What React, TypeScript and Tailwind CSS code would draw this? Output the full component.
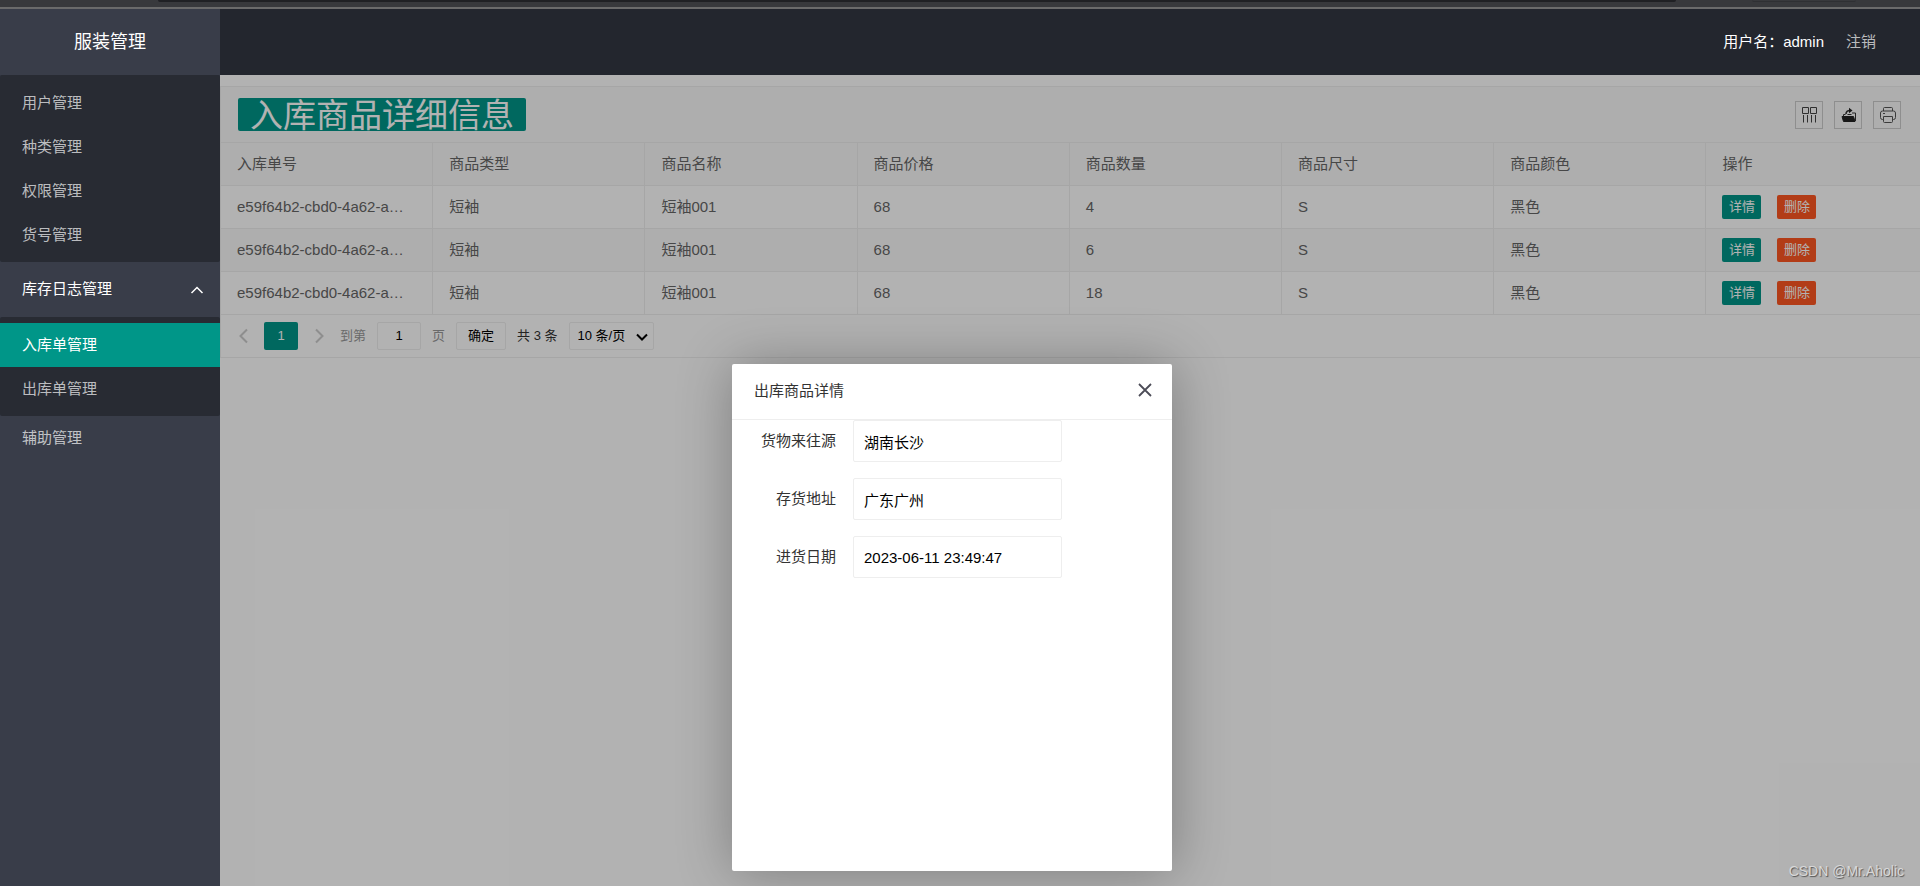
import { useState } from "react";

const FONT = "font-['Liberation_Sans','Noto_Sans_CJK_SC',sans-serif]";

const topMenu = ["用户管理", "种类管理", "权限管理", "货号管理"];
const stockMenu = ["入库单管理", "出库单管理"];
const columns = ["入库单号", "商品类型", "商品名称", "商品价格", "商品数量", "商品尺寸", "商品颜色", "操作"];
const orderId = "e59f64b2-cbd0-4a62-a…";
const rows = [
  [orderId, "短袖", "短袖001", "68", "4", "S", "黑色"],
  [orderId, "短袖", "短袖001", "68", "6", "S", "黑色"],
  [orderId, "短袖", "短袖001", "68", "18", "S", "黑色"],
];
const details = [
  { id: "source", label: "货物来往源", value: "湖南长沙" },
  { id: "address", label: "存货地址", value: "广东广州" },
  { id: "date", label: "进货日期", value: "2023-06-11 23:49:47" },
];

function ColumnsIcon() {
  return (
    <svg width="16" height="16" viewBox="0 0 16 16" fill="none" stroke="#444" strokeWidth="1">
      <path d="M.5.5h6v6h-6zM8.500.5h6v6h-6zM1.500 8v7.500M5.500 8v7.500M9.500 8v7.500M13.500 8v7.500" />
    </svg>
  );
}

function ExportIcon() {
  return (
    <svg width="16" height="16" viewBox="0 0 16 16" fill="none" stroke="#333" strokeWidth="1">
      <path d="M1 9.500h11.500l1.500 5H2.500z" fill="#222" stroke="#222" />
      <path d="M2.500 9V7.500h2M11 6h3.500v8" />
      <path d="M5 7C5 4.500 6.500 3.500 9 3.500" strokeWidth="1.600" />
      <path d="M8 .8 11.500 3.500 8 6.200z" fill="#222" stroke="none" />
      <path d="M6.500 7.500h4" />
    </svg>
  );
}

function PrintIcon() {
  return (
    <svg width="16" height="16" viewBox="0 0 16 16" fill="none" stroke="#555" strokeWidth="1">
      <path d="M3.500 4V1.500a1 1 0 0 1 1-1h7a1 1 0 0 1 1 1V4" />
      <path d="M3.500 12.500h-1a2 2 0 0 1-2-2V6a2 2 0 0 1 2-2h11a2 2 0 0 1 2 2v4.500a2 2 0 0 1-2 2h-1" />
      <path d="M3.500 9.500h9v5a1 1 0 0 1-1 1h-7a1 1 0 0 1-1-1zM3 6.500h2" />
    </svg>
  );
}

function Chevron({ d, className }: { d: string; className: string }) {
  return (
    <svg width="14" height="16" viewBox="0 0 14 16" fill="none" stroke="currentColor" className={className}>
      <path d={d} />
    </svg>
  );
}

function MenuLink({ text, active = false }: { text: string; active?: boolean }) {
  return (
    <a
      href="#"
      className={
        active
          ? "flex h-11 items-center bg-[#009688] px-[22px] text-white"
          : "flex h-11 items-center px-[22px] text-white/70"
      }
    >
      {text}
    </a>
  );
}

function Sidebar() {
  return (
    <aside className="w-[220px] shrink-0 bg-[#393d49] text-[15px]">
      <div className="flex h-[66px] items-center justify-center text-[18px] text-white shadow-[0_1px_2px_rgba(0,0,0,0.15)]">
        服装管理
      </div>
      <nav>
        <div className="rounded-xs bg-[#282b33] pt-[6px] pb-[5px]">
          {topMenu.map((t) => (
            <MenuLink key={t} text={t} />
          ))}
        </div>
        <button className="flex h-[55px] w-full items-center justify-between pr-4 pl-[22px] text-white">
          库存日志管理
          <Chevron d="M1.500 11 7 5.500 12.500 11" className="stroke-[1.5]" />
        </button>
        <div className="rounded-xs bg-[#282b33] pt-[6px] pb-[5px]">
          {stockMenu.map((t, i) => (
            <MenuLink key={t} text={t} active={i === 0} />
          ))}
        </div>
        <MenuLink text="辅助管理" />
      </nav>
    </aside>
  );
}

function Toolbar() {
  const tool = "flex size-[28px] items-center justify-center border border-[#ccc] pl-[2px]";
  return (
    <div className="flex h-[55px] items-center justify-between pr-[19px] pl-[17px]">
      <h1 className="h-[33px] rounded-xs bg-[#009688] px-3 text-[33px] leading-[35px] text-white">
        入库商品详细信息
      </h1>
      <div className="flex gap-[11px]">
        <button aria-label="筛选列" className={tool}>
          <ColumnsIcon />
        </button>
        <button aria-label="导出" className={tool}>
          <ExportIcon />
        </button>
        <button aria-label="打印" className={tool}>
          <PrintIcon />
        </button>
      </div>
    </div>
  );
}

function GoodsTable() {
  const cell = "h-[43px] border-t border-r border-[#eee] px-4 text-left font-normal whitespace-nowrap last:border-r-0";
  const action = "h-6 w-[39px] rounded-xs text-[13px] text-white";
  return (
    <table className="w-full table-fixed border-separate border-spacing-0 text-[15px] text-[#666]">
      <thead className="bg-[#fafafa]">
        <tr>
          {columns.map((c, i) => (
            <th key={c} className={i < 7 ? cell + " w-[12.49%]" : cell}>
              {c}
            </th>
          ))}
        </tr>
      </thead>
      <tbody>
        {rows.map((row, r) => (
          <tr key={r} className="even:bg-[#fafafa]">
            {row.map((v, i) => (
              <td key={i} className={cell}>
                {v}
              </td>
            ))}
            <td className={cell}>
              <div className="flex gap-4">
                <button className={action + " bg-[#009688]"}>详情</button>
                <button className={action + " bg-[#ff5722]"}>删除</button>
              </div>
            </td>
          </tr>
        ))}
      </tbody>
    </table>
  );
}

function Pagination() {
  return (
    <div className="flex h-[43px] items-center gap-[11px] border-t border-[#eee] pb-px pl-4 text-[13px] text-[#333]">
      <button aria-label="上一页" className="mr-[2px] text-[#ccc]">
        <Chevron d="M10 1.500 3.500 8l6.500 6.500" className="stroke-2" />
      </button>
      <button className="h-7 w-[34px] rounded-xs bg-[#009688] text-white">1</button>
      <button aria-label="下一页" className="mx-[3px] text-[#ccc]">
        <Chevron d="M4 1.500 10.500 8 4 14.500" className="stroke-2" />
      </button>
      <label htmlFor="page" className="text-[#999]">
        到第
      </label>
      <input id="page" defaultValue="1" className="h-7 w-[44px] rounded-xs border border-[#eee] text-center text-black" />
      <span className="text-[#999]">页</span>
      <button className="h-7 w-[50px] rounded-xs border border-[#eee] text-black">确定</button>
      <span>共 3 条</span>
      <div className="relative">
        <select
          aria-label="每页条数"
          className="h-7 w-[85px] appearance-none rounded-xs border border-[#eee] pl-2 text-black"
        >
          <option>10 条/页</option>
          <option>20 条/页</option>
        </select>
        <svg
          width="12"
          height="8"
          viewBox="0 0 12 8"
          fill="none"
          stroke="#000"
          strokeWidth="2"
          className="pointer-events-none absolute top-[11px] right-[6px]"
        >
          <path d="M1 1.500 6 6.500 11 1.500" />
        </svg>
      </div>
    </div>
  );
}

function DetailDialog({ onClose }: { onClose: () => void }) {
  return (
    <>
      <div className="absolute inset-0 bg-black/30" />
      <section
        role="dialog"
        aria-labelledby="dialog-title"
        className="absolute top-[289px] left-[512px] h-[507px] w-[440px] rounded-xs bg-white text-[15px] shadow-[1px_1px_55px_rgba(0,0,0,0.3)]"
      >
        <header className="flex h-[56px] items-center justify-between border-b border-[#eee] pr-5 pl-[22px] text-[#333]">
          <h2 id="dialog-title">出库商品详情</h2>
          <button aria-label="关闭" onClick={onClose} className="pb-1">
            <svg width="14" height="14" viewBox="0 0 14 14" stroke="#4c4c57" strokeWidth="1.800">
              <path d="M1 1 13 13M13 1 1 13" />
            </svg>
          </button>
        </header>
        <form className="flex flex-col gap-4">
          {details.map((d) => (
            <div key={d.id} className="flex items-center">
              <label htmlFor={d.id} className="w-[121px] pr-[17px] text-right text-[#333]">
                {d.label}
              </label>
              <input
                id={d.id}
                defaultValue={d.value}
                className="h-[42px] w-[209px] rounded-xs border border-[#eee] px-[10px] text-black"
              />
            </div>
          ))}
        </form>
      </section>
    </>
  );
}

export default function App() {
  const [open, setOpen] = useState(true);
  return (
    <div className={FONT + " flex min-h-screen flex-col"}>
      <div className="flex h-[9px] gap-[76px] border-b-2 border-[#6b6b6b] bg-[#38393c] pr-[64px] pl-[158px]">
        <div className="h-[2px] grow rounded-b-xs bg-[#202124]" />
        <div className="h-[2px] w-[104px] rounded-b-xs border-b border-[#2f3033]" />
      </div>
      <div className="flex grow">
        <Sidebar />
        <div className="flex min-w-0 grow flex-col">
          <header className="flex h-[66px] items-center justify-end gap-[22px] bg-[#23262e] pr-11 text-[15px]">
            <span className="text-white">用户名：admin</span>
            <a href="#" className="text-white/70">
              注销
            </a>
          </header>
          <main className="relative grow overflow-hidden bg-white pt-[11px]">
            <div className="border-y border-l border-[#eee]">
              <div className="bg-[#fafafa]">
                <Toolbar />
              </div>
              <GoodsTable />
              <Pagination />
            </div>
            {open && <DetailDialog onClose={() => setOpen(false)} />}
            <p className="absolute right-4 bottom-[4px] text-[14px] text-[#d8d8d8] [text-shadow:1px_1px_1px_#555]">
              CSDN @Mr.Aholic
            </p>
          </main>
        </div>
      </div>
    </div>
  );
}
